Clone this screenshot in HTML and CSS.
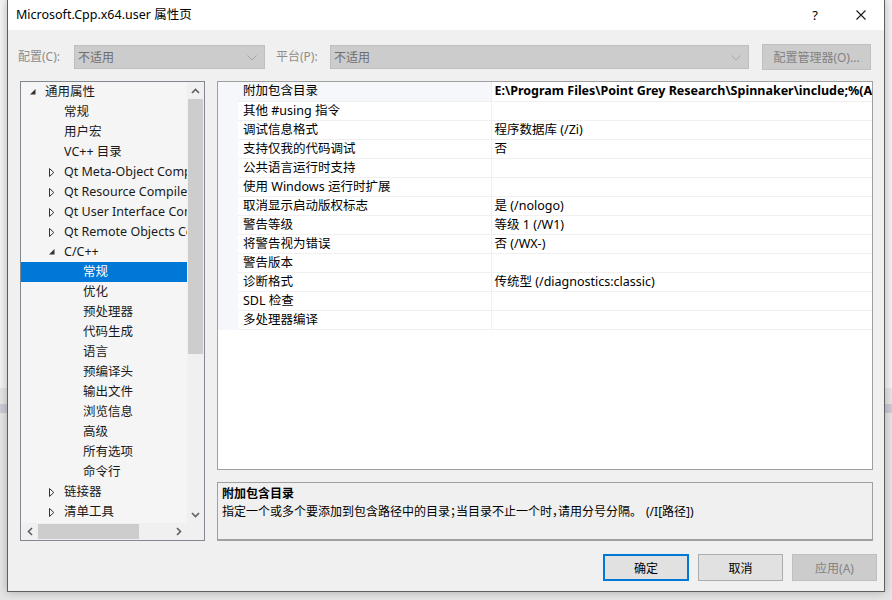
FILE: index.html
```html
<!DOCTYPE html>
<html lang="zh-CN">
<head>
  <meta charset="UTF-8">
  <title>Microsoft.Cpp.x64.user 属性页</title>
  <link rel="stylesheet" href="styles.css">
</head>
<body>
  <div class="dialog">
    <div class="titlebar">
      <span class="title">Microsoft.Cpp.x64.user 属性页</span>
      <span class="tb-btn help">?</span>
      <span class="tb-btn close">
        <svg width="12" height="12" viewBox="0 0 12 12"><path d="M1.5 1.5 L10.5 10.5 M10.5 1.5 L1.5 10.5" stroke="#1a1a1a" stroke-width="1.1" fill="none"/></svg>
      </span>
    </div>

    <div class="toolbar">
      <span class="lbl lbl-config">配置(C):</span>
      <div class="combo combo-config">
        <span>不适用</span>
        <svg class="chev" width="10" height="6" viewBox="0 0 10 6"><path d="M0.5 0.5 L5 5 L9.5 0.5" stroke="#a6a6a6" fill="none"/></svg>
      </div>
      <span class="lbl lbl-platform">平台(P):</span>
      <div class="combo combo-platform">
        <span>不适用</span>
        <svg class="chev" width="10" height="6" viewBox="0 0 10 6"><path d="M0.5 0.5 L5 5 L9.5 0.5" stroke="#a6a6a6" fill="none"/></svg>
      </div>
      <button class="btn btn-manager" disabled>配置管理器(O)...</button>
    </div>

    <div class="main">
      <div class="tree">
        <div class="tree-body">
          <div class="tree-view">
            <ul class="tree-list">
              <li class="lv1"><span class="tog"><svg width="6" height="6" viewBox="0 0 6 6"><path d="M5.5 0 L5.5 5.5 L0 5.5 Z" fill="#333"/></svg></span>通用属性</li>
              <li class="lv2"><span class="tog"></span>常规</li>
              <li class="lv2"><span class="tog"></span>用户宏</li>
              <li class="lv2"><span class="tog"></span>VC++ 目录</li>
              <li class="lv2"><span class="tog"><svg width="6" height="9" viewBox="0 0 6 9"><path d="M0.5 0.5 L4.8 4.5 L0.5 8.5 Z" stroke="#333" fill="none"/></svg></span>Qt Meta-Object Compiler</li>
              <li class="lv2"><span class="tog"><svg width="6" height="9" viewBox="0 0 6 9"><path d="M0.5 0.5 L4.8 4.5 L0.5 8.5 Z" stroke="#333" fill="none"/></svg></span>Qt Resource Compiler</li>
              <li class="lv2"><span class="tog"><svg width="6" height="9" viewBox="0 0 6 9"><path d="M0.5 0.5 L4.8 4.5 L0.5 8.5 Z" stroke="#333" fill="none"/></svg></span>Qt User Interface Compiler</li>
              <li class="lv2"><span class="tog"><svg width="6" height="9" viewBox="0 0 6 9"><path d="M0.5 0.5 L4.8 4.5 L0.5 8.5 Z" stroke="#333" fill="none"/></svg></span>Qt Remote Objects Compiler</li>
              <li class="lv2"><span class="tog"><svg width="6" height="6" viewBox="0 0 6 6"><path d="M5.5 0 L5.5 5.5 L0 5.5 Z" fill="#333"/></svg></span>C/C++</li>
              <li class="lv3 selected"><span class="tog"></span>常规</li>
              <li class="lv3"><span class="tog"></span>优化</li>
              <li class="lv3"><span class="tog"></span>预处理器</li>
              <li class="lv3"><span class="tog"></span>代码生成</li>
              <li class="lv3"><span class="tog"></span>语言</li>
              <li class="lv3"><span class="tog"></span>预编译头</li>
              <li class="lv3"><span class="tog"></span>输出文件</li>
              <li class="lv3"><span class="tog"></span>浏览信息</li>
              <li class="lv3"><span class="tog"></span>高级</li>
              <li class="lv3"><span class="tog"></span>所有选项</li>
              <li class="lv3"><span class="tog"></span>命令行</li>
              <li class="lv2"><span class="tog"><svg width="6" height="9" viewBox="0 0 6 9"><path d="M0.5 0.5 L4.8 4.5 L0.5 8.5 Z" stroke="#333" fill="none"/></svg></span>链接器</li>
              <li class="lv2"><span class="tog"><svg width="6" height="9" viewBox="0 0 6 9"><path d="M0.5 0.5 L4.8 4.5 L0.5 8.5 Z" stroke="#333" fill="none"/></svg></span>清单工具</li>
            </ul>
          </div>
          <div class="vscroll">
            <span class="arrow"><svg width="9" height="6" viewBox="0 0 9 6"><path d="M1 5 L4.5 1.5 L8 5" stroke="#606060" stroke-width="1.6" fill="none"/></svg></span>
            <div class="vtrack"><div class="vthumb"></div></div>
            <span class="arrow"><svg width="9" height="6" viewBox="0 0 9 6"><path d="M1 1 L4.5 4.5 L8 1" stroke="#606060" stroke-width="1.6" fill="none"/></svg></span>
          </div>
        </div>
        <div class="hscroll-row">
          <div class="hscroll">
            <span class="arrow"><svg width="6" height="9" viewBox="0 0 6 9"><path d="M5 1 L1.5 4.5 L5 8" stroke="#606060" stroke-width="1.6" fill="none"/></svg></span>
            <div class="htrack"><div class="hthumb"></div></div>
            <span class="arrow"><svg width="6" height="9" viewBox="0 0 6 9"><path d="M1 1 L4.5 4.5 L1 8" stroke="#606060" stroke-width="1.6" fill="none"/></svg></span>
          </div>
          <div class="corner"></div>
        </div>
      </div>

      <div class="right">
        <div class="grid">
          <table class="props">
            <tr class="current"><td class="gut"></td><td class="name">附加包含目录</td><td class="val"><b>E:\Program Files\Point Grey Research\Spinnaker\include;%(AdditionalIncludeDirectories)</b></td></tr>
            <tr><td class="gut"></td><td class="name">其他 #using 指令</td><td class="val"></td></tr>
            <tr><td class="gut"></td><td class="name">调试信息格式</td><td class="val">程序数据库 (/Zi)</td></tr>
            <tr><td class="gut"></td><td class="name">支持仅我的代码调试</td><td class="val">否</td></tr>
            <tr><td class="gut"></td><td class="name">公共语言运行时支持</td><td class="val"></td></tr>
            <tr><td class="gut"></td><td class="name">使用 Windows 运行时扩展</td><td class="val"></td></tr>
            <tr><td class="gut"></td><td class="name">取消显示启动版权标志</td><td class="val">是 (/nologo)</td></tr>
            <tr><td class="gut"></td><td class="name">警告等级</td><td class="val">等级 1 (/W1)</td></tr>
            <tr><td class="gut"></td><td class="name">将警告视为错误</td><td class="val">否 (/WX-)</td></tr>
            <tr><td class="gut"></td><td class="name">警告版本</td><td class="val"></td></tr>
            <tr><td class="gut"></td><td class="name">诊断格式</td><td class="val">传统型 (/diagnostics:classic)</td></tr>
            <tr><td class="gut"></td><td class="name">SDL 检查</td><td class="val"></td></tr>
            <tr><td class="gut"></td><td class="name">多处理器编译</td><td class="val"></td></tr>
          </table>
        </div>
        <div class="desc">
          <div class="desc-title">附加包含目录</div>
          <div class="desc-text">指定一个或多个要添加到包含路径中的目录；当目录不止一个时，请用分号分隔。<span class="switch">(/I[路径])</span></div>
        </div>
      </div>
    </div>

    <div class="footer">
      <button class="btn btn-ok">确定</button>
      <button class="btn btn-cancel">取消</button>
      <button class="btn btn-apply" disabled>应用(A)</button>
    </div>
  </div>
</body>
</html>
```

FILE: styles.css
```css
* { box-sizing: border-box; margin: 0; padding: 0; }
html, body { height: 100%; overflow: hidden; }
body {
  font-family: "Noto Sans", "Noto Sans CJK SC", sans-serif;
  font-size: 12px;
  color: #000;
  background:
    linear-gradient(to bottom, transparent 404px, #c9cad3 404px, #c9cad3 413px, transparent 413px),
    linear-gradient(to bottom, #f2f2f2 0, #f2f2f2 388px, #e4e4e4 388px, #e4e4e4 600px);
}

.dialog {
  margin-left: 7px;
  width: 878px;
  height: 592px;
  border: 1px solid #5f5f5f;
  border-top: none;
  background: #f0f0f0;
  display: flex;
  flex-direction: column;
  box-shadow: 0 0 8px rgba(0,0,0,0.25);
}

/* title bar */
.titlebar {
  height: 30px;
  background: #fff;
  display: flex;
  align-items: center;
  padding-left: 8px;
  flex-shrink: 0;
}
.title { flex: 1; font-size: 12.5px; line-height: 30px; padding-bottom: 1px; }
.tb-btn { width: 46px; height: 30px; display: flex; align-items: center; justify-content: center; }
.tb-btn.help { font-size: 13px; }
.tb-btn.close { width: 46px; }

/* config row */
.toolbar {
  height: 51px;
  display: flex;
  align-items: flex-start;
  padding: 14px 0 0 10px;
  flex-shrink: 0;
}
.lbl { color: #8d8d8d; line-height: 26px; }
.lbl-config { width: 56px; }
.lbl-platform { width: 54px; margin-left: 11px; }
.combo {
  height: 24px;
  margin-top: 1px;
  background: #cccccc;
  border: 1px solid #bfbfbf;
  display: flex;
  align-items: center;
  justify-content: space-between;
  padding: 0 7px 0 3px;
  color: #6d6d6d;
}
.combo-config { width: 191px; }
.combo-platform { width: 419px; }
.chev { margin-top: 1px; }

.btn {
  font-family: inherit;
  font-size: 12px;
  height: 27px;
  background: #e1e1e1;
  border: 1px solid #adadad;
  color: #000;
}
.btn-manager {
  margin-left: 13px;
  width: 109px;
  height: 26px;
  background: #cccccc;
  border-color: #bfbfbf;
  color: #838383;
}

/* main area */
.main {
  height: 460px;
  display: flex;
  padding-left: 12px;
  gap: 12px;
  flex-shrink: 0;
}

.tree {
  width: 185px;
  border: 1px solid #828790;
  background: #f5f5f5;
  display: flex;
  flex-direction: column;
}
.tree-body { flex: 1; display: flex; min-height: 0; }
.tree-view { flex: 1; overflow: hidden; }
.tree-list { list-style: none; font-size: 12.5px; }
.tree-list li {
  height: 20px;
  line-height: 20px;
  display: flex;
  align-items: center;
  white-space: nowrap;
  color: #1a1a1a;
}
.tree-list li.lv1 { padding-left: 9px; }
.tree-list li.lv2 { padding-left: 28px; }
.tree-list li.lv3 { padding-left: 47px; }
.tree-list li.selected { background: #0078d7; color: #fff; }
.tog { width: 15px; flex-shrink: 0; display: flex; align-items: center; }
.tog svg { display: block; }

.vscroll {
  width: 17px;
  background: #f0f0f0;
  display: flex;
  flex-direction: column;
}
.vscroll .arrow, .hscroll .arrow {
  display: flex;
  align-items: center;
  justify-content: center;
  flex-shrink: 0;
}
.vscroll .arrow { height: 17px; }
.vtrack { flex: 1; padding: 0 1px; }
.vthumb { height: 255px; background: #cdcdcd; }

.hscroll-row { height: 17px; display: flex; flex-shrink: 0; }
.hscroll { flex: 1; display: flex; background: #f0f0f0; }
.hscroll .arrow { width: 17px; }
.htrack { flex: 1; padding: 1px 0; }
.hthumb { width: 101px; height: 100%; background: #cdcdcd; }
.corner { width: 17px; background: #f0f0f0; }

.right {
  width: 656px;
  display: flex;
  flex-direction: column;
  gap: 12px;
}

.grid {
  height: 389px;
  border: 1px solid #a0a0a0;
  background: #fff;
  overflow: hidden;
}
.props {
  border-collapse: collapse;
  width: 100%;
  table-layout: fixed;
  font-size: 12.5px;
}
.props td {
  height: 19px;
  line-height: 18px;
  border-bottom: 1px solid #f0f0f0;
  white-space: nowrap;
  overflow: hidden;
  padding: 0;
  vertical-align: middle;
}
.props td.gut { width: 20px; background: #f5f7fa; border-bottom-color: #f5f7fa; }
.props td.name { width: 253px; padding-left: 5px; border-right: 1px solid #f0f0f0; }
.props td.val { padding-left: 3px; }
.props tr.current td.name { background: #f5f7fa; }

.desc {
  height: 59px;
  border: 1px solid #a0a0a0;
  border-bottom: 2px solid #a0a0a0;
  background: #f0f0f0;
  padding: 2px 0 0 4px;
}
.desc-title { font-weight: bold; line-height: 18px; }
.desc-text { line-height: 18px; font-feature-settings: "halt"; }
.switch { margin-left: 10px; }

/* buttons */
.footer {
  flex: 1;
  display: flex;
  justify-content: flex-end;
  align-items: flex-start;
  padding: 13px 7px 0 0;
  gap: 9px;
}
.btn-ok { width: 86px; border: 2px solid #0078d7; }
.btn-cancel { width: 85px; }
.btn-apply { width: 85px; background: #cccccc; border-color: #bfbfbf; color: #838383; }
```
